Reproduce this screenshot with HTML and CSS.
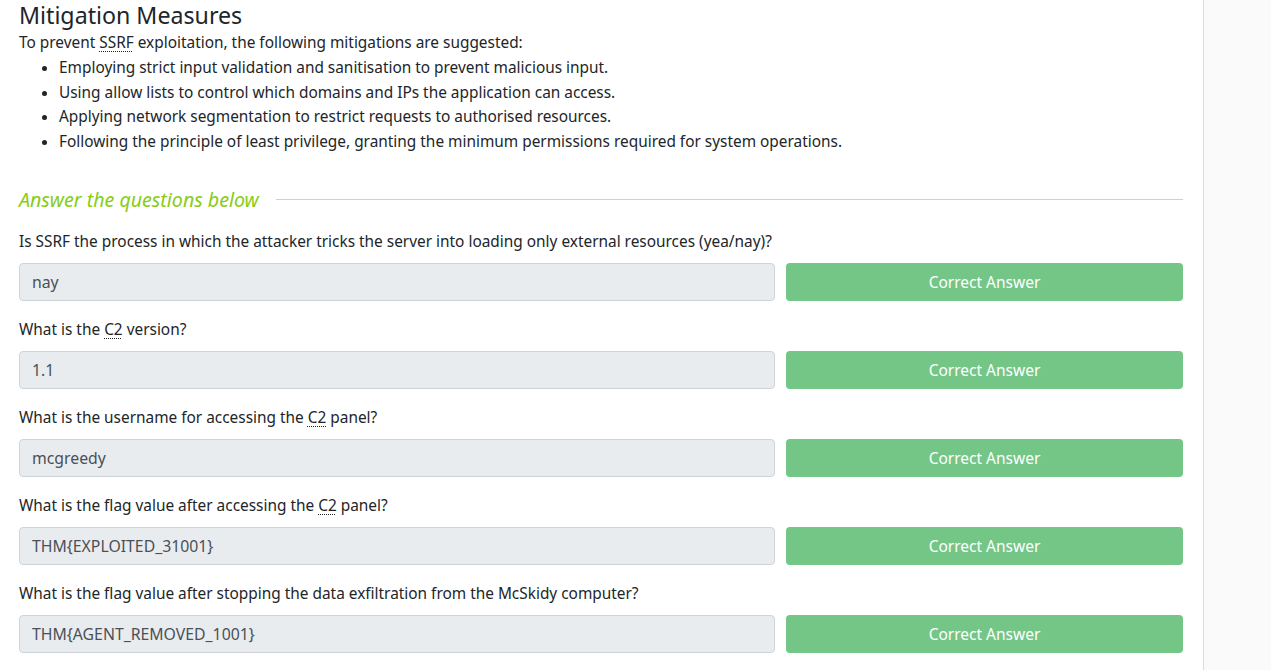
FILE: index.html
```html
<!DOCTYPE html>
<html>
<head>
<meta charset="utf-8">
<link rel="stylesheet" href="styles.css">
</head>
<body>
<div class="layout">
  <main class="content">
    <h3 class="title">Mitigation Measures</h3>
    <p class="para">To prevent <abbr>SSRF</abbr> exploitation, the following mitigations are suggested:</p>
    <ul class="list">
      <li>Employing strict input validation and sanitisation to prevent malicious input.</li>
      <li>Using allow lists to control which domains and IPs the application can access.</li>
      <li>Applying network segmentation to restrict requests to authorised resources.</li>
      <li>Following the principle of least privilege, granting the minimum permissions required for system operations.</li>
    </ul>
    <div class="answers-head">
      <span class="answers-title">Answer the questions below</span>
      <span class="answers-rule"></span>
    </div>
    <div class="question">
      <p class="q-text">Is SSRF the process in which the attacker tricks the server into loading only external resources (yea/nay)?</p>
      <div class="q-row"><div class="q-input">nay</div><div class="q-btn">Correct Answer</div></div>
    </div>
    <div class="question">
      <p class="q-text">What is the <abbr>C2</abbr> version?</p>
      <div class="q-row"><div class="q-input">1.1</div><div class="q-btn">Correct Answer</div></div>
    </div>
    <div class="question">
      <p class="q-text">What is the username for accessing the <abbr>C2</abbr> panel?</p>
      <div class="q-row"><div class="q-input">mcgreedy</div><div class="q-btn">Correct Answer</div></div>
    </div>
    <div class="question">
      <p class="q-text">What is the flag value after accessing the <abbr>C2</abbr> panel?</p>
      <div class="q-row"><div class="q-input">THM{EXPLOITED_31001}</div><div class="q-btn">Correct Answer</div></div>
    </div>
    <div class="question">
      <p class="q-text">What is the flag value after stopping the data exfiltration from the McSkidy computer?</p>
      <div class="q-row"><div class="q-input">THM{AGENT_REMOVED_1001}</div><div class="q-btn">Correct Answer</div></div>
    </div>
  </main>
  <aside class="side"></aside>
</div>
</body>
</html>
```
FILE: styles.css
```css
html, body {
  margin: 0;
  padding: 0;
  background: #fff;
}
body {
  font-family: "Noto Sans", "Open Sans", sans-serif;
  color: #212529;
  font-size: 15.4px;
  overflow: hidden;
}
.layout {
  display: flex;
  height: 670px;
}
.content {
  width: 1164px;
  padding: 0 20px 0 19px;
  border-right: 1px solid #dcdcdc;
}
.side {
  flex: 1;
  background: #fafafa;
}
.title {
  margin: 0;
  font-size: 23.2px;
  font-weight: 400;
  line-height: 31px;
}
.para {
  margin: 0;
  line-height: 24.75px;
}
abbr {
  text-decoration: underline dotted;
  text-decoration-thickness: 1px;
  text-underline-offset: 3px;
}
.list {
  margin: 0;
  padding-left: 40px;
  line-height: 24.75px;
}
.answers-head {
  display: flex;
  align-items: center;
  margin-top: 30px;
  height: 30px;
}
.answers-title {
  font-style: italic;
  font-size: 19.6px;
  color: #88cc14;
  margin-right: 17px;
}
.answers-rule {
  flex: 1;
  border-top: 1px solid #cfcfcf;
}
.question {
  margin-top: 15px;
}
.question + .question {
  margin-top: 17px;
}
.q-text {
  margin: 0;
  line-height: 24px;
}
.q-row {
  display: flex;
  gap: 11px;
  margin-top: 9px;
}
.q-input {
  width: 730px;
  height: 36px;
  line-height: 36px;
  padding: 0 12px;
  background: #e9ecef;
  border: 1px solid #ced4da;
  border-radius: 4px;
  color: #495057;
  font-size: 15.8px;
}
.q-btn {
  flex: 1;
  height: 38px;
  line-height: 38px;
  text-align: center;
  background: #73c686;
  color: #fff;
  border-radius: 4px;
  font-size: 15.5px;
}
```
